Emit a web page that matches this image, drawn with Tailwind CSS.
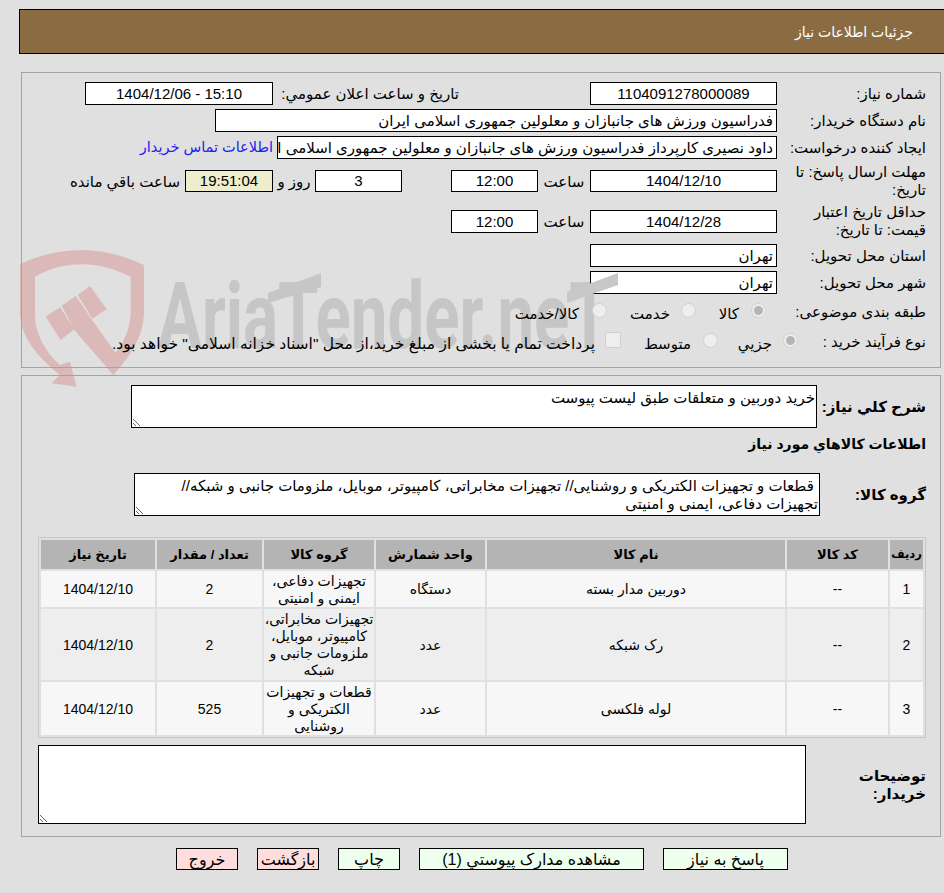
<!DOCTYPE html>
<html lang="fa">
  <head>
    <meta charset="UTF-8" />
    <title>جزئیات اطلاعات نیاز</title>
    <script src="https://cdn.jsdelivr.net/npm/@tailwindcss/browser@4"></script>
  </head>
  <body dir="rtl" class="relative bg-[#e0e0e0] h-[893px] w-[944px] overflow-hidden text-[15px] leading-[17px] text-black font-['Liberation_Sans','DejaVu_Sans',sans-serif]">
    <!-- watermark -->
    <svg class="absolute left-[10px] top-[240px] w-[170px] h-[150px]" viewBox="0 0 510 450" fill="#dbb9b9">
      <path d="M30 72 C90 45 150 30 215 30 C280 30 345 48 402 75 L402 220 C400 290 360 350 310 405 L285 375 C330 330 360 280 362 220 L362 110 C310 85 265 73 215 73 C165 73 120 85 75 110 L75 230 C76 280 105 335 150 375 L180 365 L200 440 L125 430 L150 405 C80 350 32 290 30 220 Z" />
      <path d="M155 197 L197 168 L245 238 L335 365 L310 405 L195 272 Z" />
      <path d="M107 230 L150 202 L193 268 L152 300 Z" />
      <path d="M203 165 L240 138 L290 207 L247 236 Z" />
    </svg>
    <div dir="ltr" class="absolute left-[158px] top-[267px] h-[100px] w-[470px] text-[#c6c6c6] font-bold text-[92px] leading-[100px] font-['Roboto',sans-serif]">
      <span class="inline-block origin-left scale-x-[0.71] whitespace-nowrap">AriaTender.neT</span>
    </div>
    <!-- slanted bar of the first T -->
    <svg class="absolute left-[268px] top-[273px] w-[53px] h-[30px]" viewBox="0 0 53 30" fill="#c6c6c6">
      <polygon points="0,20 53,0 53,14 0,30" />
    </svg>

    <div class="relative">
      <header class="mt-[9px] ml-[19px] h-[45px] flex items-center pr-[31px] pt-[1px] bg-[#8b6c42] border border-black border-r-0 text-white text-[14px]">جزئیات اطلاعات نیاز</header>

      <!-- first panel -->
      <section class="mt-[18px] ml-[21px] mr-[3px] h-[296px] border border-[#a3a3a3] pt-[9px] pr-[14px]">
        <div class="flex items-center h-[23px]">
          <div class="w-[149px]">شماره نیاز:</div>
          <div class="w-[187px] h-[23px] leading-[21px] border border-black bg-white text-center">1104091278000089</div>
          <div class="mr-[131px] w-[181px] whitespace-nowrap">تاریخ و ساعت اعلان عمومي:</div>
          <div class="mr-[5px] w-[188px] h-[23px] leading-[21px] border border-black bg-white text-center">15:10 - 1404/12/06</div>
        </div>
        <div class="flex items-center h-[23px] mt-[4px]">
          <div class="w-[149px]">نام دستگاه خریدار:</div>
          <div class="w-[562px] h-[23px] leading-[21px] border border-black bg-white pr-[3px]">فدراسیون ورزش های جانبازان و معلولین جمهوری اسلامی ایران</div>
        </div>
        <div class="flex items-center h-[23px] mt-[4px]">
          <div class="w-[149px] whitespace-nowrap">ایجاد کننده درخواست:</div>
          <div class="w-[500px] h-[23px] leading-[21px] border border-black bg-white px-[3px] overflow-hidden whitespace-nowrap">داود نصیری کارپرداز فدراسیون ورزش های جانبازان و معلولین جمهوری اسلامی ایران</div>
          <a href="#" class="mr-[4px] whitespace-nowrap text-[14.5px] text-[#2222ee]">اطلاعات تماس خریدار</a>
        </div>
        <div class="flex items-center h-[34px] mt-[5px]">
          <div class="w-[149px] leading-[18px]">مهلت ارسال پاسخ: تا تاریخ:</div>
          <div class="w-[187px] h-[22px] leading-[20px] border border-black bg-white text-center">1404/12/10</div>
          <div class="w-[52px] text-center">ساعت</div>
          <div class="w-[87px] h-[22px] leading-[20px] border border-black bg-white text-center">12:00</div>
          <div class="mr-[49px] w-[87px] h-[22px] leading-[20px] border border-black bg-white text-center">3</div>
          <div class="w-[42px] text-center">روز و</div>
          <div class="w-[88px] h-[22px] leading-[20px] border border-black bg-[#eeeecc] text-center">19:51:04</div>
          <div class="mr-[5px] whitespace-nowrap">ساعت باقي مانده</div>
        </div>
        <div class="flex items-center h-[34px] mt-[6px]">
          <div class="w-[149px] leading-[18px] pl-[10px]">حداقل تاریخ اعتبار قیمت: تا تاریخ:</div>
          <div class="w-[187px] h-[23px] leading-[21px] border border-black bg-white text-center">1404/12/28</div>
          <div class="w-[52px] text-center">ساعت</div>
          <div class="w-[87px] h-[23px] leading-[21px] border border-black bg-white text-center">12:00</div>
        </div>
        <div class="flex items-center h-[23px] mt-[6px]">
          <div class="w-[149px]">استان محل تحویل:</div>
          <div class="w-[187px] h-[23px] leading-[21px] border border-black bg-white pr-[3px]">تهران</div>
        </div>
        <div class="flex items-center h-[23px] mt-[4px]">
          <div class="w-[149px]">شهر محل تحویل:</div>
          <div class="w-[187px] h-[23px] leading-[21px] border border-black bg-white pr-[3px]">تهران</div>
        </div>
        <div class="flex items-center h-[23px] mt-[6px]">
          <div class="w-[160px]">طبقه بندی موضوعی:</div>
          <input type="radio" name="cat" checked disabled class="appearance-none size-[15px] -mt-[3px] rounded-full border border-[#d0d0d0] bg-[#eeeeee] checked:bg-[radial-gradient(circle,#b5b5b5_4px,#eeeeee_5px)]" />
          <div class="w-[55px] pr-[12px] mt-[4px]">کالا</div>
          <input type="radio" name="cat" disabled class="appearance-none size-[15px] -mt-[3px] rounded-full border border-[#d0d0d0] bg-[#eeeeee]" />
          <div class="w-[74px] pr-[11px] mt-[4px]">خدمت</div>
          <input type="radio" name="cat" disabled class="appearance-none size-[15px] -mt-[3px] rounded-full border border-[#d0d0d0] bg-[#eeeeee]" />
          <div class="pr-[13px] mt-[4px] whitespace-nowrap">کالا/خدمت</div>
        </div>
        <div class="flex items-center h-[23px] mt-[7px]">
          <div class="w-[128px]">نوع فرآیند خرید :</div>
          <input type="radio" name="kind" checked disabled class="appearance-none size-[15px] -mt-[3px] rounded-full border border-[#d0d0d0] bg-[#eeeeee] checked:bg-[radial-gradient(circle,#b5b5b5_4px,#eeeeee_5px)]" />
          <div class="w-[65px] pr-[11px] mt-[4px]">جزیي</div>
          <input type="radio" name="kind" disabled class="appearance-none size-[15px] -mt-[3px] rounded-full border border-[#d0d0d0] bg-[#eeeeee]" />
          <div class="w-[82px] pr-[12px] mt-[4px]">متوسط</div>
          <input type="checkbox" disabled class="appearance-none size-[16px] -mt-[3px] rounded-[2px] border border-[#d0d0d0] bg-[#eeeeee]" />
          <div class="pr-[10px] mt-[4px] whitespace-nowrap text-[15.5px]">پرداخت تمام یا بخشی از مبلغ خرید،از محل "اسناد خزانه اسلامی" خواهد بود.</div>
        </div>
      </section>

      <!-- second panel -->
      <section class="mt-[7px] ml-[21px] mr-[3px] h-[462px] border border-[#a3a3a3] pt-[9px] pr-[14px]">
        <div class="flex items-center">
          <div class="w-[109px] font-bold whitespace-nowrap">شرح کلي نیاز:</div>
          <textarea readonly class="w-[686px] h-[43px] px-[1px] pt-[3px] leading-[17px] border border-black bg-white resize-y outline-none">خرید دوربین و متعلقات طبق لیست پیوست</textarea>
        </div>
        <div class="mt-[8px] font-bold text-[14px]">اطلاعات کالاهاي مورد نیاز</div>
        <div class="flex items-center mt-[20px]">
          <div class="w-[106px] font-bold">گروه کالا:</div>
          <textarea readonly class="w-[686px] h-[43px] px-[1px] pt-[3px] leading-[18px] border border-black bg-white resize-y outline-none"> قطعات و تجهیزات الکتریکی و روشنایی// تجهیزات مخابراتی، کامپیوتر، موبایل، ملزومات جانبی و شبکه// تجهیزات دفاعی، ایمنی و امنیتی</textarea>
        </div>

        <table class="mt-[21px] w-[888px] table-fixed border border-[#c8c8c8] border-separate border-spacing-[2px] text-center text-[14px]">
          <thead>
            <tr class="bg-[#b4b4b4] font-bold h-[29px]">
              <th class="w-[33px] text-[11.5px] p-0">ردیف</th>
              <th class="w-[101px] text-[13px]">کد کالا</th>
              <th class="w-[298px] text-[13px]">نام کالا</th>
              <th class="w-[109px] text-[13px]">واحد شمارش</th>
              <th class="w-[110px] text-[13px]">گروه کالا</th>
              <th class="w-[105px] text-[13px]">تعداد / مقدار</th>
              <th class="w-[114px] text-[13px]">تاریخ نیاز</th>
            </tr>
          </thead>
          <tbody class="[&_td]:pt-[1px]">
            <tr class="bg-[#f7f7f7] h-[36px]">
              <td>1</td><td>--</td><td>دوربین مدار بسته</td><td>دستگاه</td>
              <td>تجهیزات دفاعی، ایمنی و امنیتی</td><td>2</td><td>1404/12/10</td>
            </tr>
            <tr class="bg-[#eeeeee] h-[71px]">
              <td>2</td><td>--</td><td>رک شبکه</td><td>عدد</td>
              <td>تجهیزات مخابراتی، کامپیوتر، موبایل، ملزومات جانبی و شبکه</td><td>2</td><td>1404/12/10</td>
            </tr>
            <tr class="bg-[#f7f7f7] h-[53px]">
              <td>3</td><td>--</td><td>لوله فلکسی</td><td>عدد</td>
              <td>قطعات و تجهیزات الکتریکی و روشنایی</td><td>525</td><td>1404/12/10</td>
            </tr>
          </tbody>
        </table>

        <div class="flex items-center mt-[7px]">
          <div class="w-[120px] pl-[50px] leading-[18px] font-bold">توضیحات خریدار:</div>
          <textarea readonly class="w-[768px] h-[79px] border border-black bg-white resize-y outline-none"></textarea>
        </div>
      </section>

      <!-- buttons -->
      <div class="flex mt-[11px] pr-[156px] gap-[19px] h-[22px] text-[16px]">
        <button class="w-[125px] border border-black bg-[#eeffee]">پاسخ به نیاز</button>
        <button class="w-[225px] border border-black bg-[#eeffee]">مشاهده مدارک پیوستي (1)</button>
        <button class="w-[62px] border border-black bg-[#eeffee]">چاپ</button>
        <button class="w-[62px] border border-black bg-[#ffdddd]">بازگشت</button>
        <button class="w-[62px] border border-black bg-[#ffdddd]">خروج</button>
      </div>
    </div>

    <!-- slanted bar of the last T, it lies over the city input -->
    <svg class="absolute left-[567px] top-[273px] w-[51px] h-[30px]" viewBox="0 0 51 30" fill="#c8c8c8">
      <polygon points="0,19 51,0 51,12 0,30" />
    </svg>
  </body>
</html>
